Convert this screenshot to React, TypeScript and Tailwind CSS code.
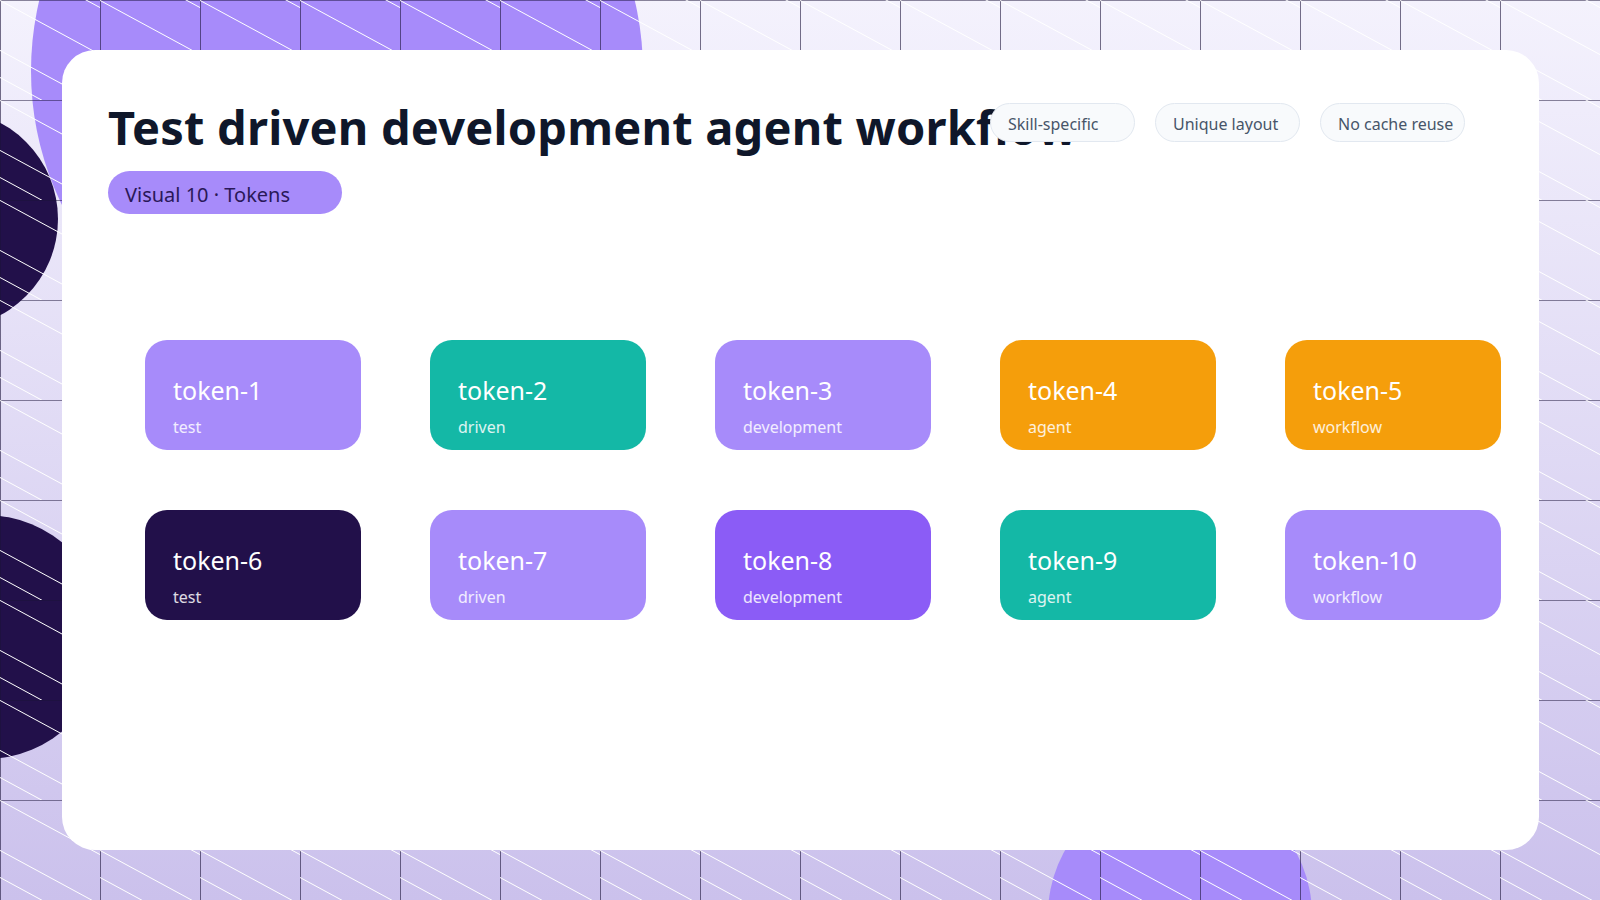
import React from 'react';

const tiles = [
  { n: 'token-1', w: 'test', c: 'bg-[#a78bfa]' },
  { n: 'token-2', w: 'driven', c: 'bg-[#14b8a6]' },
  { n: 'token-3', w: 'development', c: 'bg-[#a78bfa]' },
  { n: 'token-4', w: 'agent', c: 'bg-[#f59e0b]' },
  { n: 'token-5', w: 'workflow', c: 'bg-[#f59e0b]' },
  { n: 'token-6', w: 'test', c: 'bg-[#22104a]' },
  { n: 'token-7', w: 'driven', c: 'bg-[#a78bfa]' },
  { n: 'token-8', w: 'development', c: 'bg-[#8b5cf6]' },
  { n: 'token-9', w: 'agent', c: 'bg-[#14b8a6]' },
  { n: 'token-10', w: 'workflow', c: 'bg-[#a78bfa]' },
];

function Backdrop() {
  return (
    <svg className="absolute inset-0" width="1600" height="900">
      <defs>
        <linearGradient id="bg" x1="0" y1="0" x2="0" y2="1">
          <stop offset="0" stopColor="#f4f2fd" />
          <stop offset="1" stopColor="#cbc1ec" />
        </linearGradient>
        <pattern id="grid" width="100" height="100" patternUnits="userSpaceOnUse">
          <path d="M0 0H100M0 0V100" stroke="#1a1238" strokeWidth="1.2" fill="none" />
          <path d="M-10 -5L110 60M-10 45L110 110M40 -25L110 13M-60 45L60 110" stroke="#fff" strokeWidth="1" fill="none" />
        </pattern>
      </defs>
      <rect width="1600" height="900" fill="url(#bg)" />
      <circle cx="337" cy="71" r="306" fill="#a78bfa" />
      <circle cx="-51" cy="219" r="109" fill="#22104a" />
      <circle cx="-15" cy="637" r="122" fill="#22104a" />
      <circle cx="1180" cy="915" r="132" fill="#a78bfa" />
      <rect width="1600" height="900" fill="url(#grid)" />
    </svg>
  );
}

export default function App() {
  return (
    <div className="relative w-[1600px] h-[900px] overflow-hidden font-[family-name:'Liberation_Sans',Arial,sans-serif]">
      <Backdrop />
      <div className="absolute left-[62px] top-[50px] w-[1477px] h-[800px] bg-white rounded-[33px] pl-[46px] pt-[54px]">
        <h1 className="text-[47px] leading-none font-bold text-[#0f172a] whitespace-nowrap tracking-[0.2px]">
          Test driven development agent workflow
        </h1>
        <div className="absolute left-[928px] top-[53px] flex gap-[20px]">
          {['Skill-specific', 'Unique layout', 'No cache reuse'].map((t) => (
            <div key={t} className="w-[145px] h-[39px] rounded-full border border-[#e2e8f0] bg-[#f8fafc] pl-[17px] pt-[8px] text-[16px] text-[#475569]">
              {t}
            </div>
          ))}
        </div>
        <div className="mt-[20px] w-[234px] h-[43px] rounded-full bg-[#a78bfa] pl-[17px] pt-[9px] text-[20px] text-[#2a1858]">
          Visual 10 · Tokens
        </div>
        <div className="mt-[126px] ml-[37px] grid grid-cols-[repeat(5,216px)] gap-x-[69px] gap-y-[60px]">
          {tiles.map((t) => (
            <div key={t.n} className={`${t.c} h-[110px] rounded-[22px] pl-[28px] pt-[38px] text-white`}>
              <div className="text-[25px] leading-none">{t.n}</div>
              <div className="text-[16px] leading-none mt-[16px] text-white/85">{t.w}</div>
            </div>
          ))}
        </div>
      </div>
    </div>
  );
}
